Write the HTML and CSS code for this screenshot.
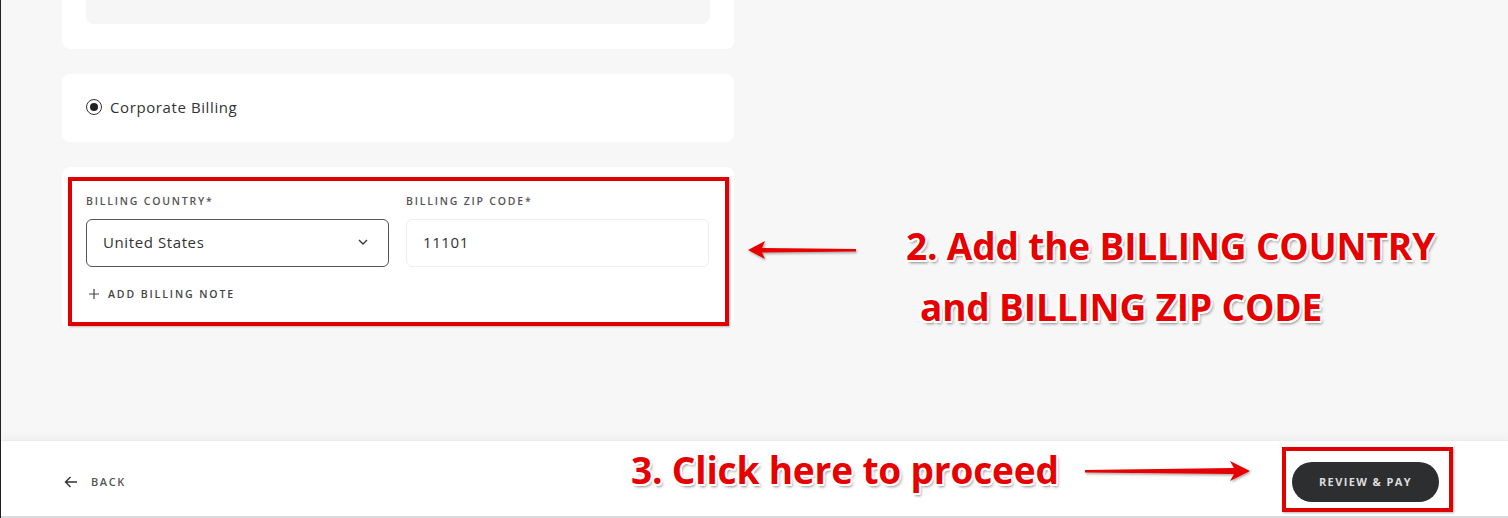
FILE: index.html
```html
<!DOCTYPE html>
<html lang="en">
<head>
<meta charset="utf-8">
<title>Billing</title>
<link rel="stylesheet" href="styles.css">
</head>
<body>
<div class="page">
  <main class="main">
    <div class="column">
      <section class="card card-top">
        <div class="card-top-inner"></div>
      </section>
      <section class="card card-radio">
        <span class="radio"><span class="radio-dot"></span></span>
        <span class="radio-label">Corporate Billing</span>
      </section>
      <section class="card card-form">
        <div class="fields">
          <div class="field">
            <div class="field-label">BILLING COUNTRY*</div>
            <div class="select">
              <span>United States</span>
              <svg class="chev" width="10" height="6" viewBox="0 0 10 6"><path d="M1 1 L5 5 L9 1" fill="none" stroke="#333" stroke-width="1.3"/></svg>
            </div>
          </div>
          <div class="field">
            <div class="field-label">BILLING ZIP CODE*</div>
            <div class="input"><span>11101</span></div>
          </div>
        </div>
        <div class="add-note">
          <svg width="10" height="10" viewBox="0 0 10 10"><path d="M5 0 V10 M0 5 H10" stroke="#444" stroke-width="1.2"/></svg>
          <span>ADD BILLING NOTE</span>
        </div>
      </section>
    </div>
  </main>
  <footer class="footer">
    <div class="back">
      <svg width="14" height="12" viewBox="0 0 14 12"><path d="M13 6 H1.5 M6.5 1 L1.5 6 L6.5 11" fill="none" stroke="#333" stroke-width="1.4"/></svg>
      <span>BACK</span>
    </div>
    <button class="pay">REVIEW &amp; PAY</button>
  </footer>

  <div class="mark mark-form"></div>
  <div class="mark mark-pay"></div>
  <svg class="arrow arrow-left" width="116" height="24" viewBox="0 0 116 24">
    <defs><filter id="sh" x="-10%" y="-40%" width="120%" height="180%"><feDropShadow dx="1" dy="1.5" stdDeviation="1" flood-color="#000" flood-opacity="0.35"/></filter></defs>
    <polygon filter="url(#sh)" fill="#e60000" points="2,12 19,3 16,10 110,11 110,13.5 16,14.5 19,21"/>
  </svg>
  <svg class="arrow arrow-right" width="176" height="26" viewBox="0 0 176 26">
    <defs><filter id="sh2" x="-10%" y="-40%" width="120%" height="180%"><feDropShadow dx="1" dy="1.5" stdDeviation="1" flood-color="#000" flood-opacity="0.35"/></filter></defs>
    <polygon filter="url(#sh2)" fill="#e60000" points="3,11 152,9 148,2 168,12 148,22 152,15 3,13.5"/>
  </svg>
  <div class="note note-1">2. Add the BILLING COUNTRY</div>
  <div class="note note-2">and BILLING ZIP CODE</div>
  <div class="note note-3">3. Click here to proceed</div>
</div>
</body>
</html>
```

FILE: styles.css
```css
* { box-sizing: border-box; }
html, body { margin: 0; padding: 0; }
body {
  width: 1508px;
  height: 518px;
  overflow: hidden;
  background: #f7f7f7;
  font-family: "Open Sans", "Liberation Sans", sans-serif;
  color: #333;
}
.page {
  position: relative;
  width: 1508px;
  height: 518px;
  display: flex;
  flex-direction: column;
  border-left: 1px solid #222;
}
.main {
  height: 440px;
  overflow: hidden;
  padding-left: 61px;
}
.column {
  width: 672px;
  display: flex;
  flex-direction: column;
  gap: 25px;
}
.card {
  background: #fff;
  border-radius: 8px;
}
.card-top {
  height: 100px;
  margin-top: -51px;
  padding: 0 24px;
}
.card-top-inner {
  height: 75px;
  background: #f6f6f6;
  border-radius: 0 0 8px 8px;
}
.card-radio {
  height: 68px;
  display: flex;
  align-items: center;
  padding-left: 24px;
  padding-bottom: 3px;
  gap: 8px;
}
.radio {
  width: 16px;
  height: 16px;
  border: 1.6px solid #333;
  border-radius: 50%;
  display: flex;
  align-items: center;
  justify-content: center;
}
.radio-dot {
  width: 8px;
  height: 8px;
  border-radius: 50%;
  background: #222;
}
.radio-label {
  font-size: 15px;
  color: #333;
  letter-spacing: 0.6px;
}
.card-form {
  height: 161px;
  padding: 27px 25px 0 24px;
}
.fields {
  display: flex;
  gap: 17px;
}
.field { width: 303px; }
.field-label {
  font-size: 10.5px;
  letter-spacing: 1.8px;
  color: #555;
  font-weight: 600;
  height: 25px;
}
.select, .input {
  height: 48px;
  border-radius: 6px;
  display: flex;
  align-items: center;
  padding: 0 16px 3px;
  font-size: 15px;
  letter-spacing: 0.6px;
  color: #333;
}
.select {
  border: 1px solid #555;
  justify-content: space-between;
  padding-right: 20px;
}
.input {
  border: 1px solid #eeeeee;
}
.add-note {
  margin-top: 20px;
  display: flex;
  align-items: center;
  gap: 9px;
  padding-left: 3px;
  font-size: 10.5px;
  font-weight: 600;
  letter-spacing: 1.9px;
  color: #444;
}
.footer {
  height: 78px;
  background: #fff;
  border-top: 1px solid #ececec;
  border-bottom: 2px solid #d9d9de;
  box-shadow: 0 -3px 8px rgba(0,0,0,0.04);
  display: flex;
  align-items: center;
  justify-content: space-between;
  padding: 6px 69px 0 63px;
}
.back {
  display: flex;
  align-items: center;
  gap: 13px;
  font-size: 11px;
  font-weight: 600;
  letter-spacing: 1.6px;
  color: #555;
}
.pay {
  width: 147px;
  height: 40px;
  border: none;
  border-radius: 20px;
  background: #2d2e30;
  color: #ddd;
  font-family: "Open Sans", "Liberation Sans", sans-serif;
  font-size: 11px;
  font-weight: 700;
  letter-spacing: 1.4px;
}
.mark {
  position: absolute;
  border: 4px solid #e00000;
  box-shadow: 1px 1px 2px rgba(0,0,0,0.3);
}
.mark-form { left: 67px; top: 177px; width: 661px; height: 149px; }
.mark-pay { left: 1281px; top: 447px; width: 171px; height: 65px; }
.arrow { position: absolute; }
.arrow-left { left: 745px; top: 238px; }
.arrow-right { left: 1081px; top: 459px; }
.note {
  position: absolute;
  font-family: "Open Sans", "Liberation Sans", sans-serif;
  font-weight: 700;
  font-size: 37px;
  line-height: 1;
  letter-spacing: -0.15px;
  color: #e60000;
  white-space: nowrap;
  text-shadow:
    -1.5px -1.5px 0 #fff, 1.5px -1.5px 0 #fff, -1.5px 1.5px 0 #fff, 1.5px 1.5px 0 #fff,
    0 -2px 0 #fff, 0 2px 0 #fff, -2px 0 0 #fff, 2px 0 0 #fff,
    2px 3px 3px rgba(0,0,0,0.45);
}
.note-1 { left: 905px; top: 227px; }
.note-2 { left: 919px; top: 288px; }
.note-3 { left: 630px; top: 451px; }
```
